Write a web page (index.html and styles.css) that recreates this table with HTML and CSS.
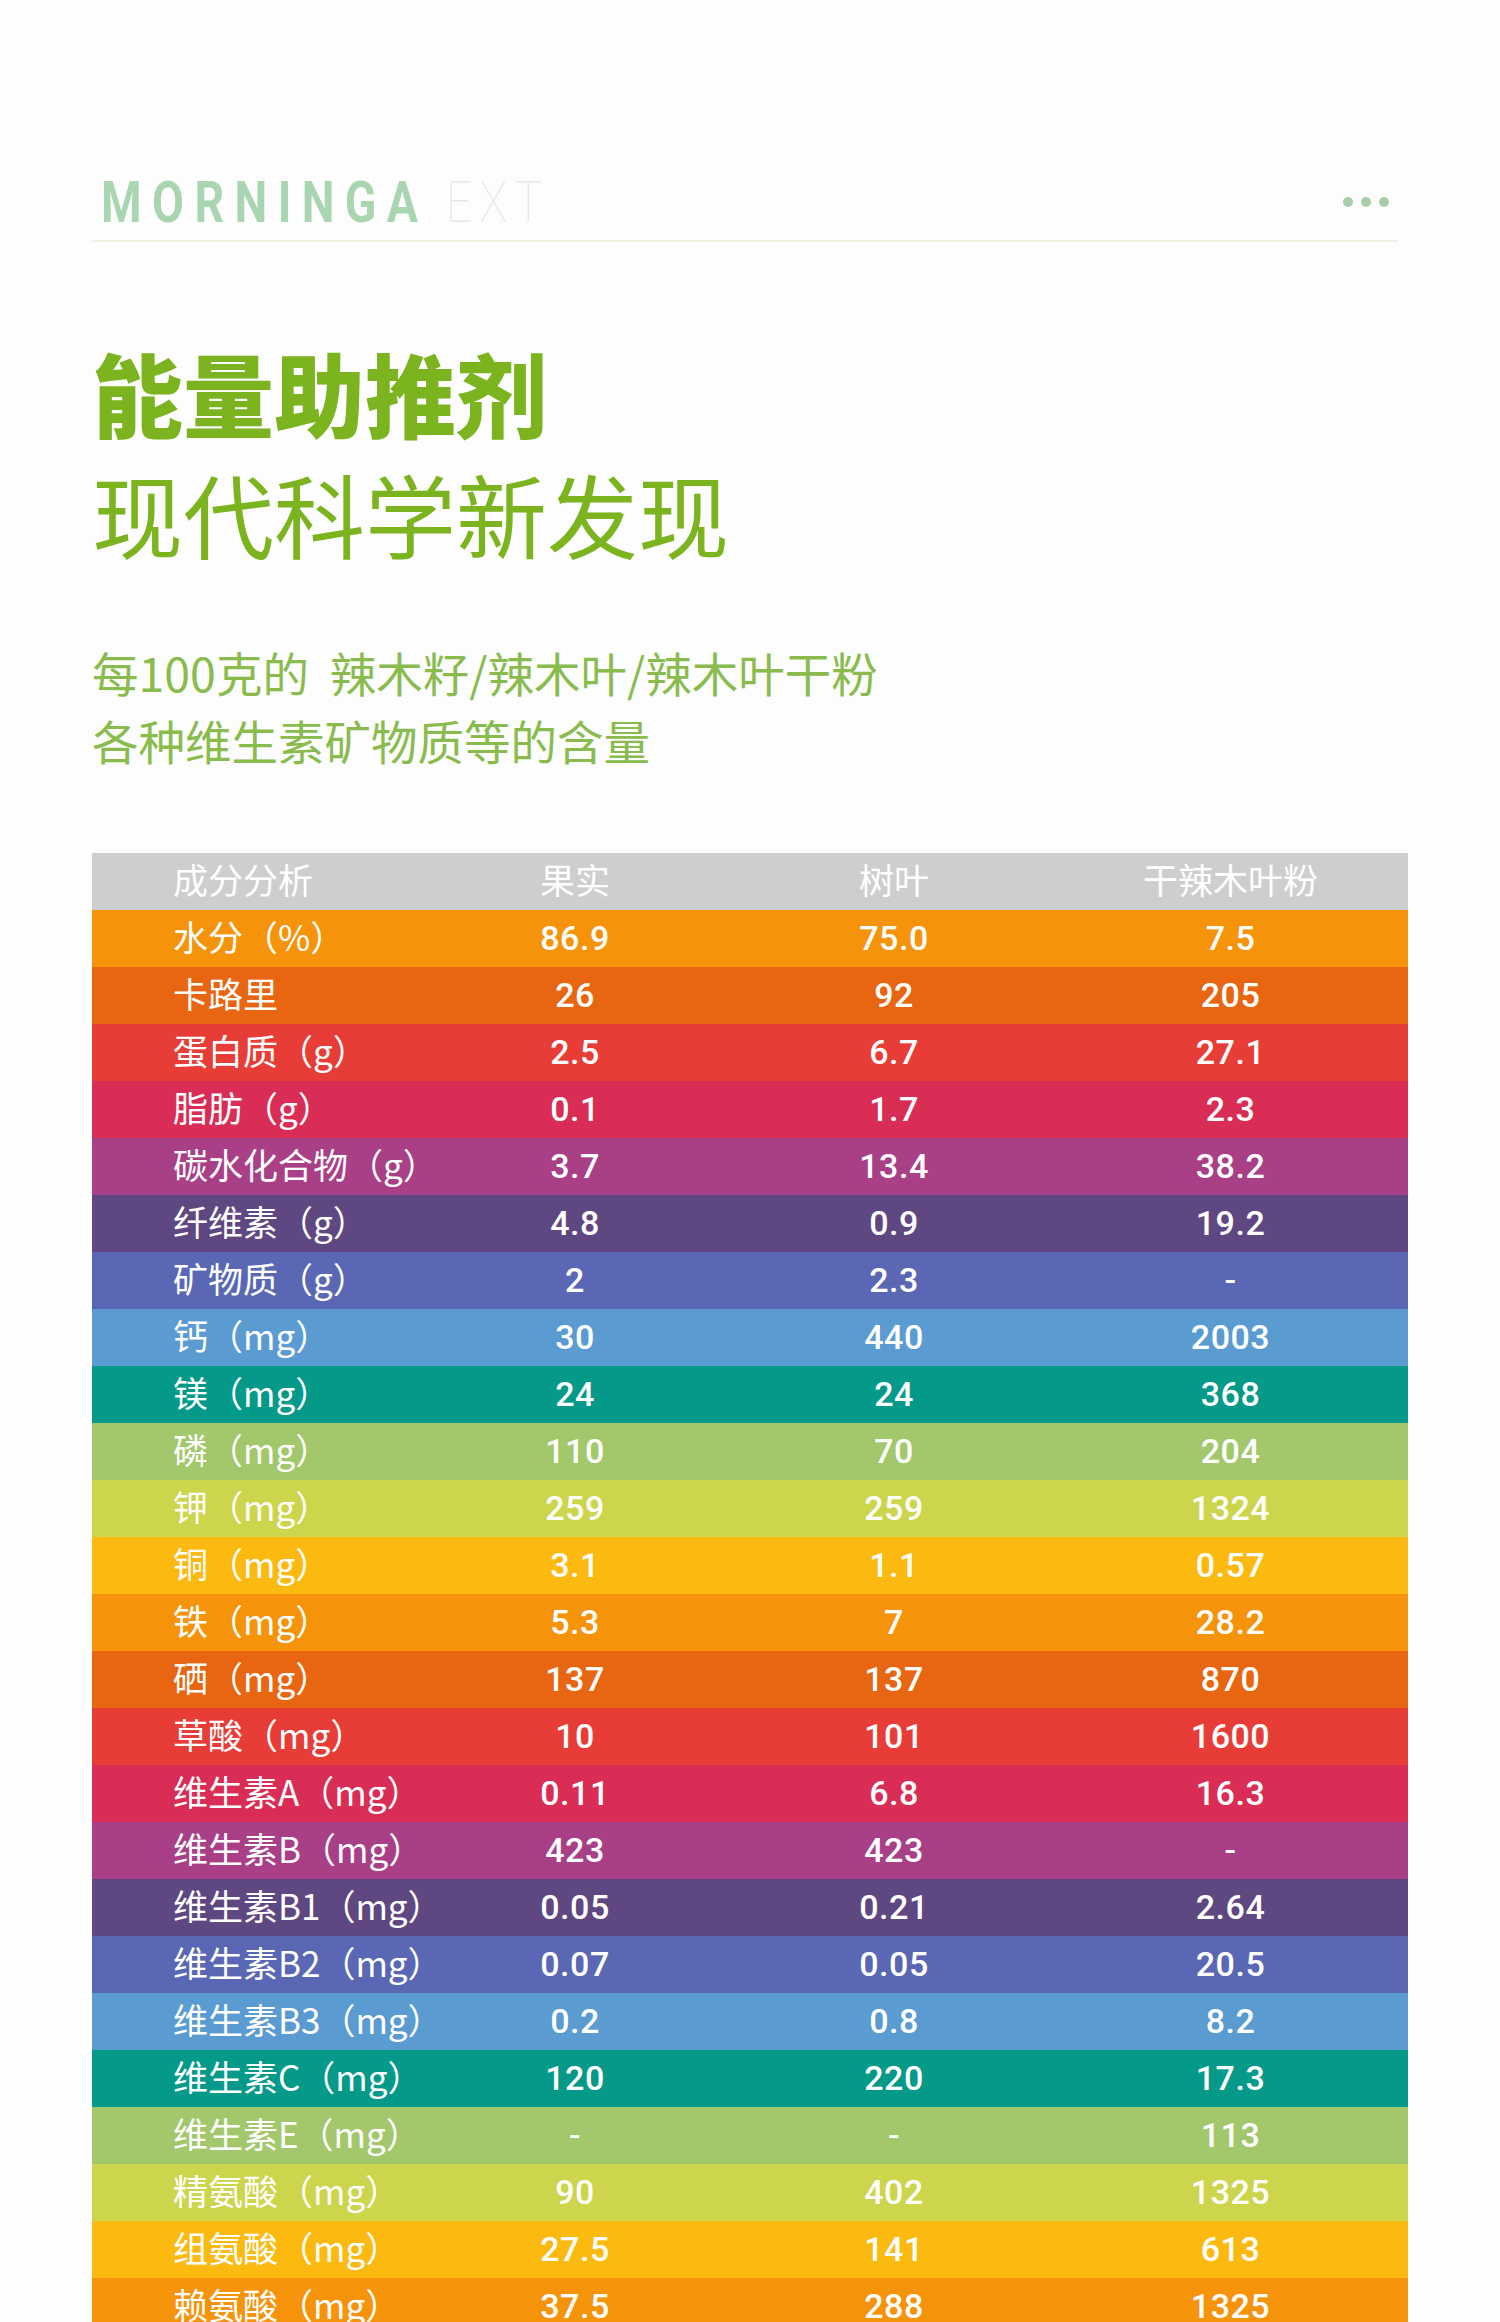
FILE: index.html
```html
<!DOCTYPE html>
<html lang="zh-CN">
<head>
<meta charset="utf-8">
<title>Morninga EXT</title>
<link rel="stylesheet" href="styles.css">
</head>
<body>
<div class="page">
  <header class="brand">
    <div class="logo"><span class="logo-bold">MORNINGA</span><span class="logo-thin">EXT</span></div>
    <div class="dots"><i></i><i></i><i></i></div>
  </header>

  <h1 class="title">
    <span class="title-strong">能量助推剂</span>
    <span class="title-light">现代科学新发现</span>
  </h1>

  <p class="intro">每100克的&nbsp; 辣木籽/辣木叶/辣木叶干粉<br>各种维生素矿物质等的含量</p>

  <div class="table">
    <div class="row head"><span class="lab">成分分析</span><span>果实</span><span>树叶</span><span>干辣木叶粉</span></div>
    <div class="row c1"><span class="lab">水分（%）</span><span>86.9</span><span>75.0</span><span>7.5</span></div>
    <div class="row c2"><span class="lab">卡路里</span><span>26</span><span>92</span><span>205</span></div>
    <div class="row c3"><span class="lab">蛋白质（g）</span><span>2.5</span><span>6.7</span><span>27.1</span></div>
    <div class="row c4"><span class="lab">脂肪（g）</span><span>0.1</span><span>1.7</span><span>2.3</span></div>
    <div class="row c5"><span class="lab">碳水化合物（g）</span><span>3.7</span><span>13.4</span><span>38.2</span></div>
    <div class="row c6"><span class="lab">纤维素（g）</span><span>4.8</span><span>0.9</span><span>19.2</span></div>
    <div class="row c7"><span class="lab">矿物质（g）</span><span>2</span><span>2.3</span><span>-</span></div>
    <div class="row c8"><span class="lab">钙（mg）</span><span>30</span><span>440</span><span>2003</span></div>
    <div class="row c9"><span class="lab">镁（mg）</span><span>24</span><span>24</span><span>368</span></div>
    <div class="row c10"><span class="lab">磷（mg）</span><span>110</span><span>70</span><span>204</span></div>
    <div class="row c11"><span class="lab">钾（mg）</span><span>259</span><span>259</span><span>1324</span></div>
    <div class="row c12"><span class="lab">铜（mg）</span><span>3.1</span><span>1.1</span><span>0.57</span></div>
    <div class="row c1"><span class="lab">铁（mg）</span><span>5.3</span><span>7</span><span>28.2</span></div>
    <div class="row c2"><span class="lab">硒（mg）</span><span>137</span><span>137</span><span>870</span></div>
    <div class="row c3"><span class="lab">草酸（mg）</span><span>10</span><span>101</span><span>1600</span></div>
    <div class="row c4"><span class="lab">维生素A（mg）</span><span>0.11</span><span>6.8</span><span>16.3</span></div>
    <div class="row c5"><span class="lab">维生素B（mg）</span><span>423</span><span>423</span><span>-</span></div>
    <div class="row c6"><span class="lab">维生素B1（mg）</span><span>0.05</span><span>0.21</span><span>2.64</span></div>
    <div class="row c7"><span class="lab">维生素B2（mg）</span><span>0.07</span><span>0.05</span><span>20.5</span></div>
    <div class="row c8"><span class="lab">维生素B3（mg）</span><span>0.2</span><span>0.8</span><span>8.2</span></div>
    <div class="row c9"><span class="lab">维生素C（mg）</span><span>120</span><span>220</span><span>17.3</span></div>
    <div class="row c10"><span class="lab">维生素E（mg）</span><span>-</span><span>-</span><span>113</span></div>
    <div class="row c11"><span class="lab">精氨酸（mg）</span><span>90</span><span>402</span><span>1325</span></div>
    <div class="row c12"><span class="lab">组氨酸（mg）</span><span>27.5</span><span>141</span><span>613</span></div>
    <div class="row c1"><span class="lab">赖氨酸（mg）</span><span>37.5</span><span>288</span><span>1325</span></div>
  </div>
</div>
</body>
</html>
```

FILE: styles.css
```css
html, body {
  margin: 0;
  padding: 0;
  background: #fdfdfd;
}

body {
  font-family: "Noto Sans CJK SC", "Noto Sans", sans-serif;
  overflow: hidden;
  height: 2322px;
}

.page {
  width: 1316px;
  margin-left: 92px;
  padding-top: 173px;
}

/* brand bar */
.brand {
  display: flex;
  align-items: center;
  justify-content: space-between;
  height: 58px;
  margin-right: 10px;
  padding-bottom: 9px;
  border-bottom: 2px solid #eef1e0;
}

.logo {
  font-family: Roboto, "Liberation Sans", sans-serif;
  font-size: 58px;
  line-height: 58px;
  letter-spacing: 13px;
  white-space: nowrap;
  margin-left: 9px;
  transform: scaleX(0.8);
  transform-origin: left center;
}

.logo-bold {
  font-weight: 700;
  color: #a9d6b1;
  margin-right: 22px;
}

.logo-thin {
  font-weight: 100;
  color: #e2ebe4;
  letter-spacing: 9px;
}

.dots {
  display: flex;
  gap: 8px;
  margin-right: 9px;
}

.dots i {
  display: block;
  width: 10px;
  height: 10px;
  border-radius: 50%;
  background: #a7cda9;
}

/* title */
.title {
  margin: 89px 0 0;
  font-size: 91px;
  line-height: 121px;
  color: #7bb41e;
  display: flex;
  flex-direction: column;
}

.title-strong {
  font-weight: 900;
}

.title-light {
  font-weight: 400;
}

.intro {
  margin: 65px 0 0;
  font-size: 46.5px;
  line-height: 68px;
  color: #89bc4d;
  font-weight: 400;
}

/* table */
.table {
  margin-top: 79px;
}

.row {
  display: grid;
  grid-template-columns: 323px 320px 318px 355px;
  height: 57px;
  align-items: center;
  color: #ffffff;
}

.row span {
  text-align: center;
  white-space: nowrap;
  font-family: Roboto, "Liberation Sans", sans-serif;
  font-weight: 500;
  font-size: 34px;
  letter-spacing: 0.5px;
  padding-bottom: 2px;
}

.row .lab,
.row.head span {
  font-family: "Noto Sans CJK SC", sans-serif;
  font-weight: 400;
  font-size: 35px;
  letter-spacing: 0;
  padding-bottom: 6px;
}

.row .lab {
  text-align: left;
  padding-left: 81px;
}

.head { background: #cecece; }
.c1  { background: #f5930b; }
.c2  { background: #e86611; }
.c3  { background: #e73d36; }
.c4  { background: #d92d55; }
.c5  { background: #a83f87; }
.c6  { background: #5f4781; }
.c7  { background: #5a67b4; }
.c8  { background: #5a9bd1; }
.c9  { background: #05998a; }
.c10 { background: #a2c86b; }
.c11 { background: #ccd54b; }
.c12 { background: #fcb910; }
```
